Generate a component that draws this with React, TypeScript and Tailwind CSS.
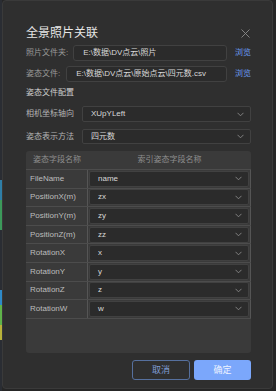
import React from 'react';

const font = { fontFamily: '"Liberation Sans", "Noto Sans CJK SC", sans-serif' };

const Chevron = () => (
  <svg width="7" height="5" viewBox="0 0 7 5" className="shrink-0">
    <polyline points="0.5,0.8 3.5,3.8 6.5,0.8" fill="none" stroke="#8a8a8a" strokeWidth="0.9" />
  </svg>
);

const Select = ({ value, className }: { value: string; className?: string }) => (
  <div
    className={`flex items-center justify-between rounded-[2px] border border-[#414141] bg-[#2b2b2b] pl-[8px] pr-[6px] text-[8px] leading-none text-[#d8d8d8] ${className ?? ''}`}
  >
    <span>{value}</span>
    <Chevron />
  </div>
);

const fields: [string, string][] = [
  ['FileName', 'name'],
  ['PositionX(m)', 'zx'],
  ['PositionY(m)', 'zy'],
  ['PositionZ(m)', 'zz'],
  ['RotationX', 'x'],
  ['RotationY', 'y'],
  ['RotationZ', 'z'],
  ['RotationW', 'w'],
];

export default function App() {
  return (
    <div className="flex h-[391px] w-[276px] bg-[#262626]" style={font}>
      {/* app behind the dialog */}
      <div className="flex w-[2px] shrink-0 flex-col">
        <div className="h-[180px] bg-[#2a2d33]" />
        <div className="h-[20px] bg-[#2f7fa8]" />
        <div className="h-[30px] bg-[#3c9a5a]" />
        <div className="h-[60px] bg-[#2a2d33]" />
        <div className="h-[15px] bg-[#2e8ac8]" />
        <div className="h-[20px] bg-[#5fb34a]" />
        <div className="h-[15px] bg-[#b8b23a]" />
        <div className="flex-1 bg-[#2a2d33]" />
      </div>

      <div className="flex h-[389px] w-[271px] shrink-0 flex-col rounded-[4px] border border-[#3a3a3a] bg-[#2f2f2f] pl-[23px] pr-[21px] pt-[24px]">
        {/* title */}
        <div className="flex h-[16px] items-center justify-between">
          <span className="text-[12px] leading-none text-[#e6e6e6]">全景照片关联</span>
          <svg width="9" height="9" viewBox="0 0 9 9" className="mr-[1px]">
            <path d="M0.5 0.5 L8.5 8.5 M8.5 0.5 L0.5 8.5" stroke="#8c8c8c" strokeWidth="0.9" />
          </svg>
        </div>

        {/* photo folder */}
        <div className="mt-[4px] flex h-[16px] items-center gap-[5px]">
          <span className="text-[8px] leading-none text-[#9a9a9a]">照片文件夹:</span>
          <div className="flex h-full flex-1 items-center rounded-[3px] border border-[#414141] bg-[#2b2b2b] pl-[9px] text-[8px] leading-none text-[#d8d8d8]">
            E:\数据\DV点云\照片
          </div>
          <span className="ml-[3px] text-[8px] leading-none text-[#6a9cf2]">浏览</span>
        </div>

        {/* pose file */}
        <div className="mt-[5px] flex h-[16px] items-center gap-[6px]">
          <span className="text-[8px] leading-none text-[#9a9a9a]">姿态文件:</span>
          <div className="flex h-full flex-1 items-center rounded-[3px] border border-[#414141] bg-[#2b2b2b] pl-[9px] text-[8px] leading-none text-[#d8d8d8]">
            E:\数据\DV点云\原始点云\四元数.csv
          </div>
          <span className="ml-[2px] text-[8px] leading-none text-[#6a9cf2]">浏览</span>
        </div>

        <div className="mt-[6px] h-[10px] text-[8px] leading-[10px] text-[#cfcfcf]">姿态文件配置</div>

        <div className="mt-[8px] flex h-[16px] items-center gap-[8px]">
          <span className="text-[8px] leading-none text-[#b4b4b4]">相机坐标轴向</span>
          <Select value="XUpYLeft" className="h-full flex-1" />
        </div>
        <div className="mt-[7px] flex h-[15px] items-center gap-[8px]">
          <span className="text-[8px] leading-none text-[#b4b4b4]">姿态表示方法</span>
          <Select value="四元数" className="h-full flex-1" />
        </div>

        {/* field mapping table */}
        <div className="mt-[7px] flex h-[202px] flex-col rounded-[3px] bg-[#3a3a3a]">
          <div className="flex h-[18px] items-center text-[8px] leading-none text-[#8e8e8e]">
            <span className="w-[62px] shrink-0 text-center">姿态字段名称</span>
            <span className="flex-1 text-center">索引姿态字段名称</span>
          </div>
          <div className="border-t border-[#4c4c4c]">
            {fields.map(([name, value]) => (
              <div key={name} className="flex h-[18.6px] border-b border-[#4c4c4c]">
                <div className="flex w-[62px] shrink-0 items-center overflow-hidden whitespace-nowrap border-r border-[#555555] pl-[4px] text-[8px] leading-none text-[#bdbdbd]">
                  {name}
                </div>
                <div className="flex min-w-0 flex-1 items-center border-r border-[#555555] pl-[1px] pr-[1px]">
                  <Select value={value} className="h-[16px] w-full" />
                </div>
              </div>
            ))}
          </div>
        </div>

        {/* actions */}
        <div className="mt-[7px] flex justify-end gap-[4px]">
          <button className="flex h-[20px] w-[58px] items-center justify-center rounded-[3px] border border-[#56709e] text-[9px] leading-none text-[#7f9cd4]">
            取消
          </button>
          <button className="flex h-[20px] w-[57px] items-center justify-center rounded-[3px] bg-[#7ba7fb] text-[9px] leading-none text-[#eef3ff]">
            确定
          </button>
        </div>
      </div>
    </div>
  );
}
